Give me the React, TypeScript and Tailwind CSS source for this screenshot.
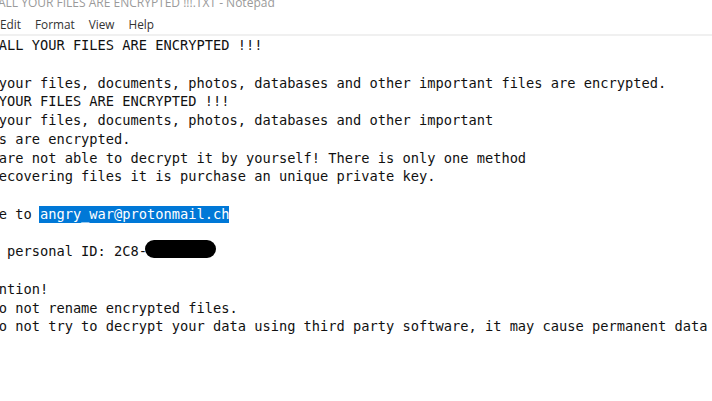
import React from "react";

const mono = { fontFamily: '"DejaVu Sans Mono", "Liberation Mono", monospace' };

export default function App() {
  const before: string[] = [
    "    ALL YOUR FILES ARE ENCRYPTED !!!",
    "",
    "All your files, documents, photos, databases and other important files are encrypted.",
    "ALL YOUR FILES ARE ENCRYPTED !!!",
    "All your files, documents, photos, databases and other important",
    "files are encrypted.",
    "You are not able to decrypt it by yourself! There is only one method",
    "of recovering files it is purchase an unique private key.",
    "",
  ];
  const after: string[] = [
    "",
    "Attention!",
    " * Do not rename encrypted files.",
    " * Do not try to decrypt your data using third party software, it may cause permanent data loss.",
  ];
  return (
    <div className="w-[712px] h-[401px] bg-white overflow-hidden flex flex-col">
      <div
        className="-mt-[5px] h-[17px] leading-[16px] text-[12px] text-[#9a9a9a] whitespace-nowrap -ml-[2px]"
        style={{ fontFamily: '"Open Sans", "Noto Sans", sans-serif' }}
      >
        ALL YOUR FILES ARE ENCRYPTED !!!.TXT - Notepad
      </div>
      <div
        className="h-[22px] leading-[24px] text-[11.8px] text-[#333] flex gap-[14px] whitespace-nowrap"
        style={{ fontFamily: '"Open Sans", "Noto Sans", sans-serif' }}
      >
        <span>Edit</span>
        <span>Format</span>
        <span>View</span>
        <span>Help</span>
      </div>
      <div className="h-[2px] bg-[#f0f0f0]" />
      <div className="flex-1 overflow-hidden">
        <div
          className="-ml-[34.25px] text-[13.7px] leading-[18.75px] text-[#111] whitespace-pre"
          style={mono}
        >
          {before.map((l, i) => (
            <div key={i} className="h-[18.75px]">{l}</div>
          ))}
          <div className="h-[18.75px]">
            Write to <span className="bg-[#0078d7] text-white pb-[1px] -ml-[1px] pl-[1px]">angry_war@protonmail.ch</span>
          </div>
          <div className="h-[18.75px]" />
          <div className="h-[18.75px]">
            Your personal ID: 2C8-
            <span className="inline-block align-top relative -top-[2px] -ml-[2px] w-[71px] h-[18px] rounded-full bg-black" />
          </div>
          {after.map((l, i) => (
            <div key={i} className="h-[18.75px]">{l}</div>
          ))}
        </div>
      </div>
    </div>
  );
}
